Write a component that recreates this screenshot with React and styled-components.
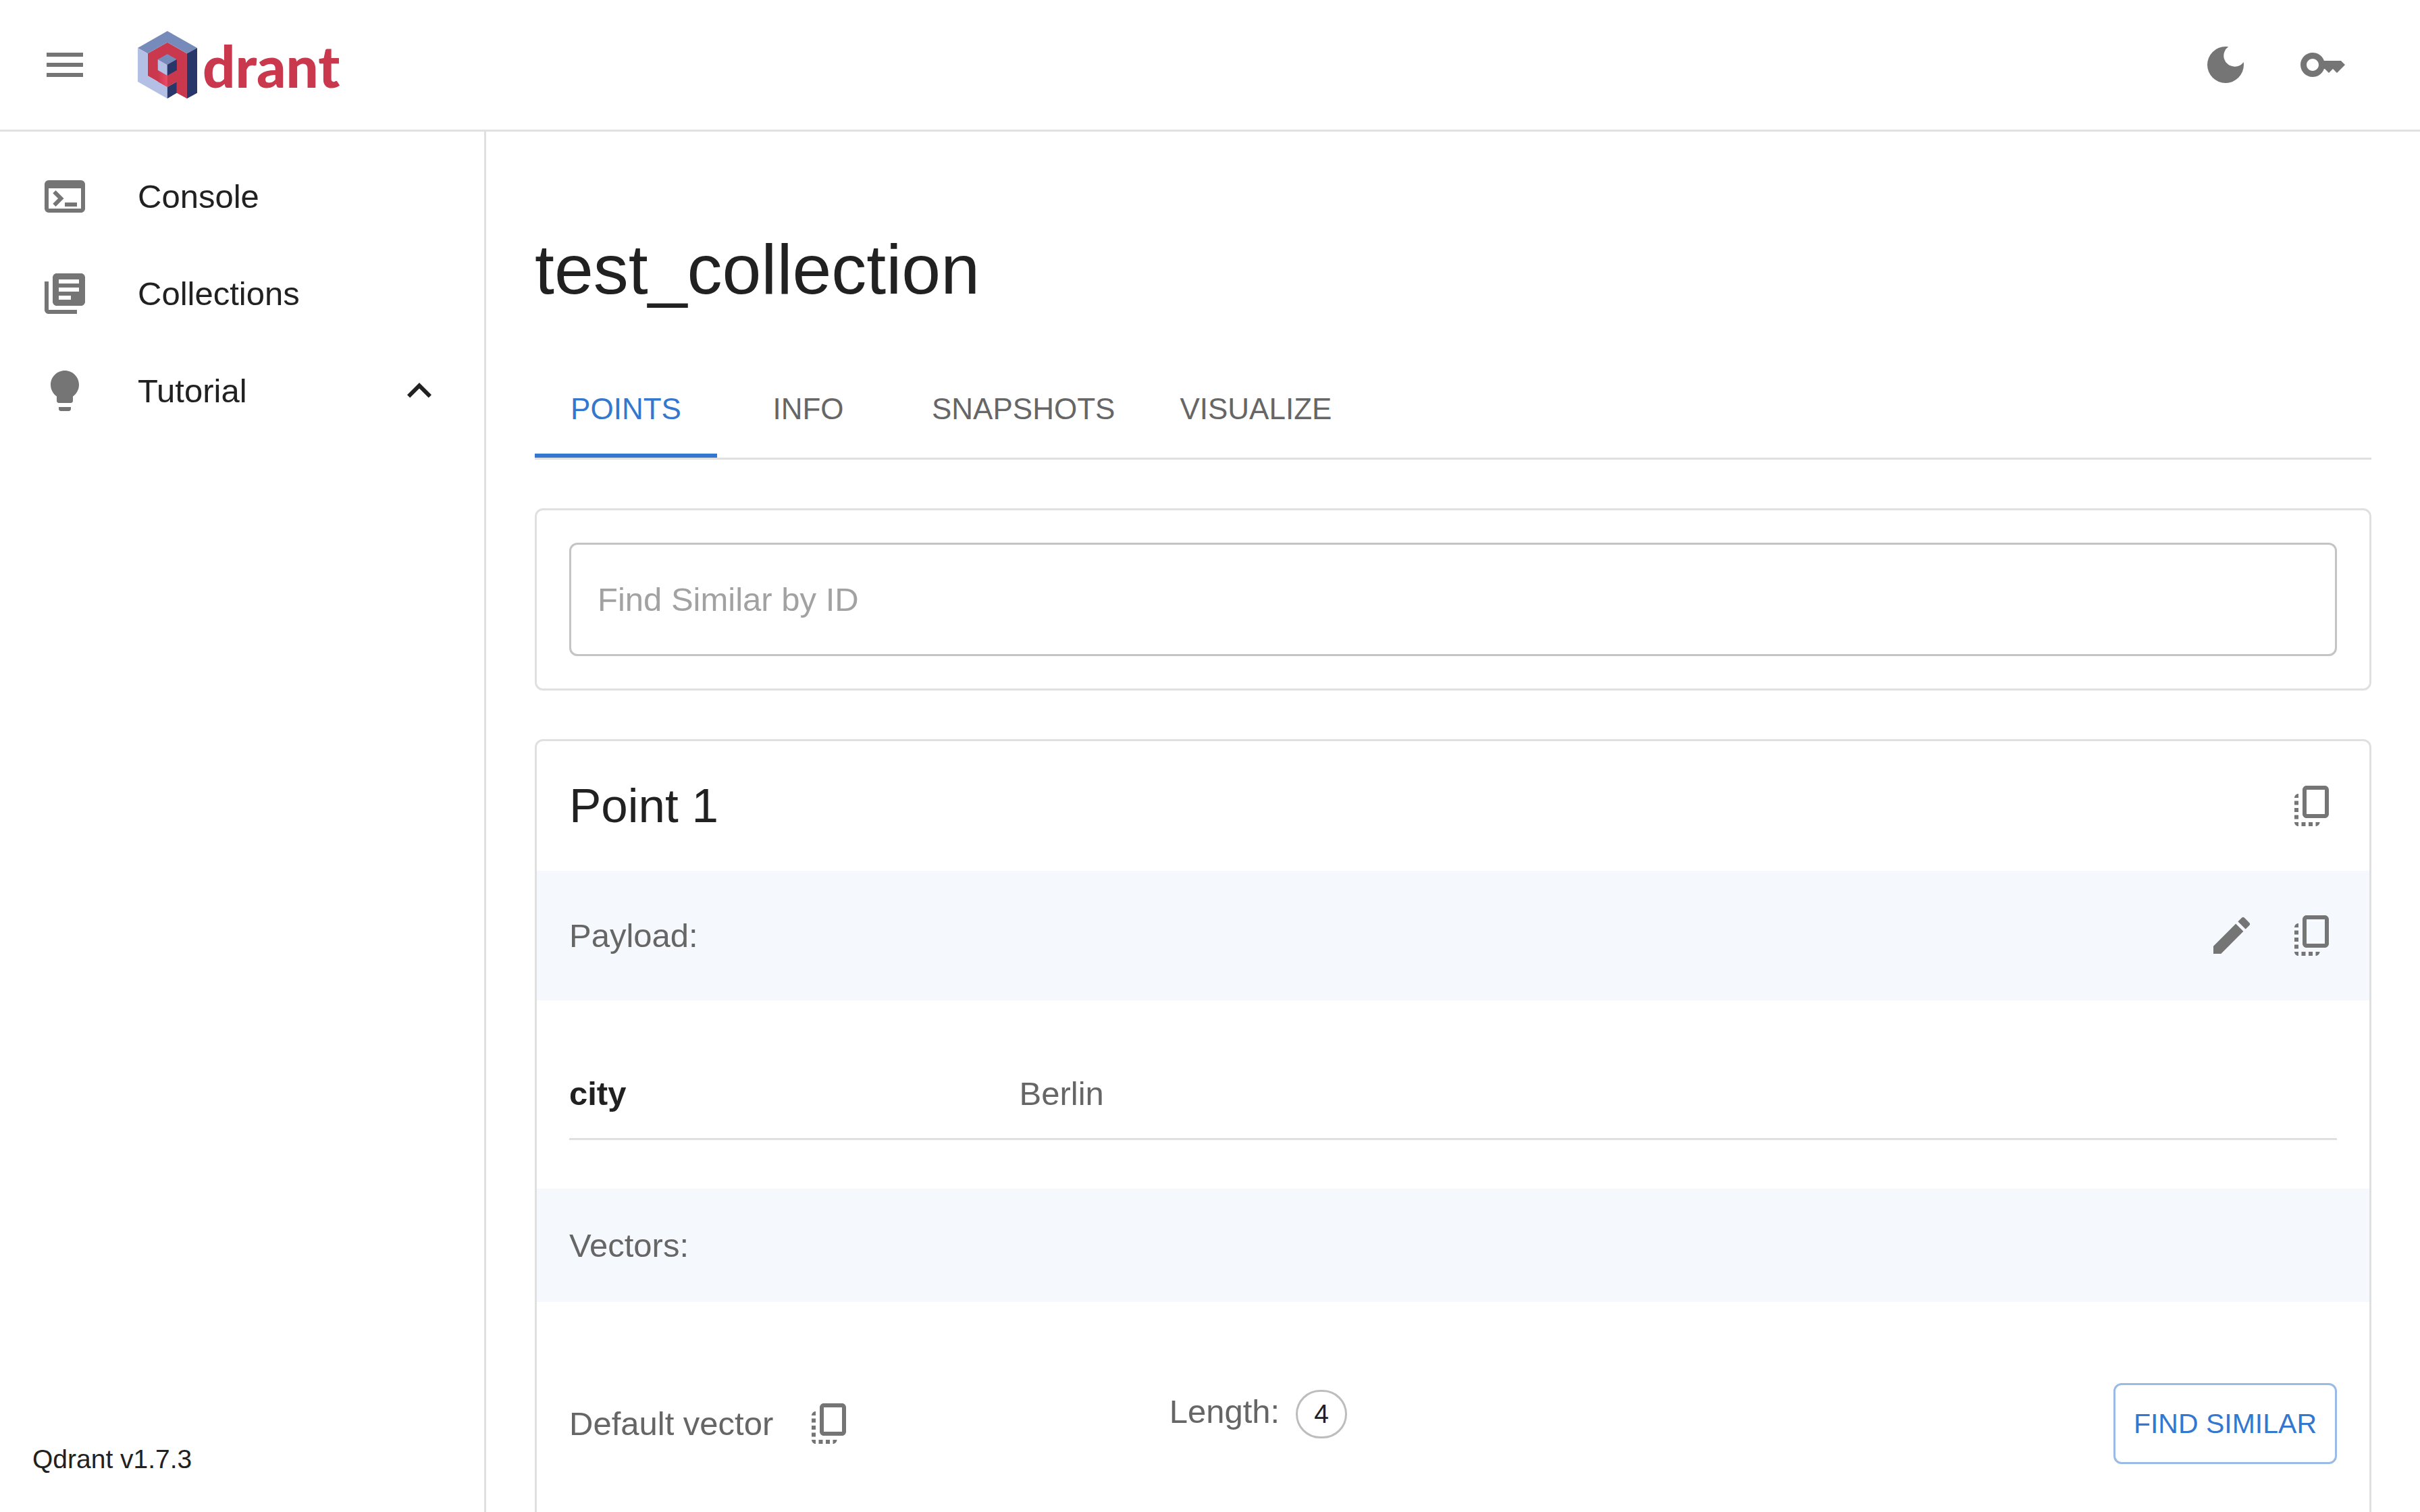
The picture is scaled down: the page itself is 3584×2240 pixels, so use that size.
import React, { useState } from "react";
import styled, { createGlobalStyle } from "styled-components";
import {
  MdMenu,
  MdDarkMode,
  MdKey,
  MdTerminal,
  MdLibraryBooks,
  MdExpandLess,
  MdCopyAll,
  MdEdit,
} from "react-icons/md";

const color = {
  text: "#212121",
  muted: "#666666",
  icon: "#757575",
  placeholder: "#a2a2a2",
  divider: "#e0e0e0",
  field: "#c4c4c4",
  chip: "#bdbdbd",
  primary: "#3477ce",
  primaryLine: "#99bbe6",
  band: "#f5f8fd",
  brand: "#ca384e",
};

const GlobalStyle = createGlobalStyle`
  *, *::before, *::after { box-sizing: border-box; }
  body {
    margin: 0;
    background: #ffffff;
    color: ${color.text};
    font-family: "Liberation Sans", Arial, Helvetica, sans-serif;
    font-size: 49px;
    line-height: 72px;
  }
  button, input { font: inherit; color: inherit; }
`;

const Shell = styled.div`
  display: flex;
  flex-direction: column;
  height: 100vh;
`;

const Header = styled.header`
  display: flex;
  align-items: center;
  flex: none;
  gap: 48px;
  height: 195px;
  padding: 0 84px 0 36px;
  border-bottom: 3px solid ${color.divider};
`;

const HeaderActions = styled.div`
  display: flex;
  gap: 24px;
  margin-left: auto;
`;

const IconButton = styled.button`
  display: flex;
  flex: none;
  padding: 24px;
  border: 0;
  border-radius: 50%;
  background: none;
  color: ${color.icon};
  cursor: pointer;

  svg {
    width: 72px;
    height: 72px;
  }
`;

const LogoLink = styled.a`
  display: flex;
  align-items: flex-start;
  gap: 8px;
  height: 100px;
  color: ${color.brand};
  text-decoration: none;
`;

const LogoMark = styled.svg`
  width: 88px;
  height: 100px;
`;

const LogoWord = styled.span`
  font-family: Lato, "Open Sans", sans-serif;
  font-size: 85px;
  font-weight: 900;
  line-height: 102px;
`;

const Body = styled.div`
  display: flex;
  flex: 1;
  min-height: 0;
`;

const Sidebar = styled.aside`
  display: flex;
  flex-direction: column;
  justify-content: space-between;
  flex: none;
  width: 720px;
  padding: 24px 0 48px;
  border-right: 3px solid ${color.divider};
`;

const NavItem = styled.a`
  display: flex;
  align-items: center;
  gap: 72px;
  width: 100%;
  height: 144px;
  padding: 0 60px;
  border: 0;
  background: none;
  color: ${color.text};
  text-align: left;
  text-decoration: none;
  cursor: pointer;

  svg {
    flex: none;
    width: 72px;
    height: 72px;
  }

  svg:first-child {
    color: ${color.icon};
  }
`;

const NavLabel = styled.span`
  flex: 1;
`;

const Version = styled.footer`
  padding: 0 48px;
  font-size: 39px;
  line-height: 60px;
`;

const Main = styled.main`
  display: flex;
  flex-direction: column;
  flex: 1;
  gap: 72px;
  min-width: 0;
  padding: 141px 72px 72px;
  overflow-y: auto;
  scrollbar-width: none;

  > * {
    flex: none;
  }
`;

const PageTitle = styled.h1`
  margin: 0;
  font-size: 104px;
  font-weight: 400;
  line-height: 126px;
`;

const TabList = styled.div`
  display: flex;
  border-bottom: 3px solid ${color.divider};
`;

const Tab = styled.button`
  min-width: 270px;
  height: 144px;
  padding: 6px 48px 0;
  border: 0;
  border-bottom: 6px solid ${(p) => (p.$active ? color.primary : "transparent")};
  background: none;
  color: ${(p) => (p.$active ? color.primary : color.muted)};
  font-size: 44px;
  text-transform: uppercase;
  cursor: pointer;
`;

const Card = styled.section`
  border: 3px solid ${color.divider};
  border-radius: 12px;
  overflow: hidden;
`;

const SearchForm = styled.form`
  display: flex;
  padding: 48px;
`;

const SearchInput = styled.input`
  flex: 1;
  min-width: 0;
  height: 168px;
  padding: 0 39px;
  border: 3px solid ${color.field};
  border-radius: 12px;
  background: none;
  outline: none;

  &::placeholder {
    color: ${color.placeholder};
    opacity: 1;
  }
`;

const CardBar = styled.div`
  display: flex;
  align-items: center;
  justify-content: space-between;
  padding: ${(p) => (p.$compact ? "48px" : "36px 24px 36px 48px")};
  background: ${(p) => (p.$tinted ? color.band : "none")};
`;

const BarActions = styled.div`
  display: flex;
`;

const PointTitle = styled.h2`
  margin: 0;
  font-size: 71px;
  font-weight: 400;
  line-height: 96px;
`;

const SectionTitle = styled.h3`
  margin: 0;
  color: ${color.muted};
  font-size: 49px;
  font-weight: 400;
`;

const PayloadList = styled.dl`
  margin: 0;
  padding: 72px 48px;
`;

const PayloadRow = styled.div`
  display: grid;
  grid-template-columns: repeat(12, 1fr);
  column-gap: 48px;
  padding: 30px 0;
  border-bottom: 3px solid ${color.divider};
`;

const PayloadKey = styled.dt`
  grid-column: span 3;
  font-weight: 700;
`;

const PayloadValue = styled.dd`
  grid-column: span 9;
  margin: 0;
  color: ${color.muted};
`;

const VectorRow = styled.div`
  display: grid;
  grid-template-columns: repeat(12, 1fr);
  column-gap: 48px;
  padding: 120px 48px;
  color: ${color.muted};
`;

const VectorName = styled.div`
  grid-column: span 4;
  display: flex;
  align-items: center;
  gap: 24px;
`;

const VectorLength = styled.div`
  grid-column: span 4;
  display: flex;
  align-items: baseline;
  align-self: start;
  gap: 24px;
  line-height: 84px;
`;

const Chip = styled.span`
  padding: 0 24px;
  border: 3px solid ${color.chip};
  border-radius: 36px;
  color: ${color.text};
  font-size: 39px;
  line-height: 66px;
`;

const VectorActions = styled.div`
  grid-column: span 4;
  display: flex;
  justify-content: flex-end;
`;

const OutlinedButton = styled.button`
  height: 120px;
  padding: 0 27px;
  border: 3px solid ${color.primaryLine};
  border-radius: 12px;
  background: none;
  color: ${color.primary};
  font-size: 41px;
  text-transform: uppercase;
  white-space: nowrap;
  cursor: pointer;
`;

function QdrantMark() {
  return (
    <LogoMark viewBox="73 48 263 300" preserveAspectRatio="none" aria-hidden="true">
      <defs>
        <linearGradient id="fold" x1="0" x2="1" y1="0" y2="0">
          <stop offset="0" stopColor="#ca384e" />
          <stop offset="1" stopColor="#ee4a69" />
        </linearGradient>
      </defs>
      <polygon fill="#ca384e" points="204,98 291,148 291,348 246,323 246,273 204,297 117,247 117,148" />
      <polygon fill="#778bba" points="204,48 336,123 291,148 204,98 117,148 73,123" />
      <polygon fill="#b4bfe6" points="73,123 117,148 117,247 204,297 204,348 73,273" />
      <polygon fill="#283669" points="336,123 336,323 291,348 291,148" />
      <polygon fill="#283669" points="204,297 246,273 246,323 204,348" />
      <polygon fill="url(#fold)" points="162,222 204,246 204,297 162,273" />
      <polygon fill="#778bba" points="204,150 246,174 204,198 162,174" />
      <polygon fill="#b4bfe6" points="162,174 204,198 204,246 162,222" />
      <polygon fill="#283669" points="246,174 246,222 204,246 204,198" />
    </LogoMark>
  );
}

function BulbIcon() {
  return (
    <svg viewBox="0 0 24 24" fill="currentColor" aria-hidden="true">
      <path d="M9 21c0 .55.45 1 1 1h4c.55 0 1-.45 1-1v-1H9v1zm3-19C8.14 2 5 5.14 5 9c0 2.38 1.19 4.47 3 5.74V17c0 .55.45 1 1 1h6c.55 0 1-.45 1-1v-2.26c1.81-1.27 3-3.36 3-5.74 0-3.86-3.14-7-7-7z" />
    </svg>
  );
}

const tabs = ["Points", "Info", "Snapshots", "Visualize"];
const payload = [["city", "Berlin"]];

export default function App() {
  const [tab, setTab] = useState("Points");

  return (
    <Shell>
      <GlobalStyle />
      <Header>
        <IconButton type="button" aria-label="Toggle menu">
          <MdMenu />
        </IconButton>
        <LogoLink href="#/" aria-label="qdrant">
          <QdrantMark />
          <LogoWord>drant</LogoWord>
        </LogoLink>
        <HeaderActions>
          <IconButton type="button" aria-label="Dark mode">
            <MdDarkMode />
          </IconButton>
          <IconButton type="button" aria-label="API key">
            <MdKey />
          </IconButton>
        </HeaderActions>
      </Header>

      <Body>
        <Sidebar>
          <nav>
            <NavItem href="#/console">
              <MdTerminal />
              <NavLabel>Console</NavLabel>
            </NavItem>
            <NavItem href="#/collections">
              <MdLibraryBooks />
              <NavLabel>Collections</NavLabel>
            </NavItem>
            <NavItem as="button" type="button" aria-expanded="false">
              <BulbIcon />
              <NavLabel>Tutorial</NavLabel>
              <MdExpandLess />
            </NavItem>
          </nav>
          <Version>Qdrant v1.7.3</Version>
        </Sidebar>

        <Main>
          <PageTitle>test_collection</PageTitle>

          <TabList role="tablist">
            {tabs.map((name) => (
              <Tab
                key={name}
                type="button"
                role="tab"
                aria-selected={tab === name}
                $active={tab === name}
                onClick={() => setTab(name)}
              >
                {name}
              </Tab>
            ))}
          </TabList>

          <Card>
            <SearchForm onSubmit={(e) => e.preventDefault()}>
              <SearchInput type="text" aria-label="Find Similar by ID" placeholder="Find Similar by ID" />
            </SearchForm>
          </Card>

          <Card>
            <CardBar>
              <PointTitle>Point 1</PointTitle>
              <IconButton type="button" aria-label="Copy point">
                <MdCopyAll />
              </IconButton>
            </CardBar>
            <CardBar $tinted>
              <SectionTitle>Payload:</SectionTitle>
              <BarActions>
                <IconButton type="button" aria-label="Edit payload">
                  <MdEdit />
                </IconButton>
                <IconButton type="button" aria-label="Copy payload">
                  <MdCopyAll />
                </IconButton>
              </BarActions>
            </CardBar>
            <PayloadList>
              {payload.map(([key, value]) => (
                <PayloadRow key={key}>
                  <PayloadKey>{key}</PayloadKey>
                  <PayloadValue>{value}</PayloadValue>
                </PayloadRow>
              ))}
            </PayloadList>
            <CardBar $tinted $compact>
              <SectionTitle>Vectors:</SectionTitle>
            </CardBar>
            <VectorRow>
              <VectorName>
                <span>Default vector</span>
                <IconButton type="button" aria-label="Copy vector">
                  <MdCopyAll />
                </IconButton>
              </VectorName>
              <VectorLength>
                <span>Length:</span>
                <Chip>4</Chip>
              </VectorLength>
              <VectorActions>
                <OutlinedButton type="button">Find Similar</OutlinedButton>
              </VectorActions>
            </VectorRow>
          </Card>
        </Main>
      </Body>
    </Shell>
  );
}
